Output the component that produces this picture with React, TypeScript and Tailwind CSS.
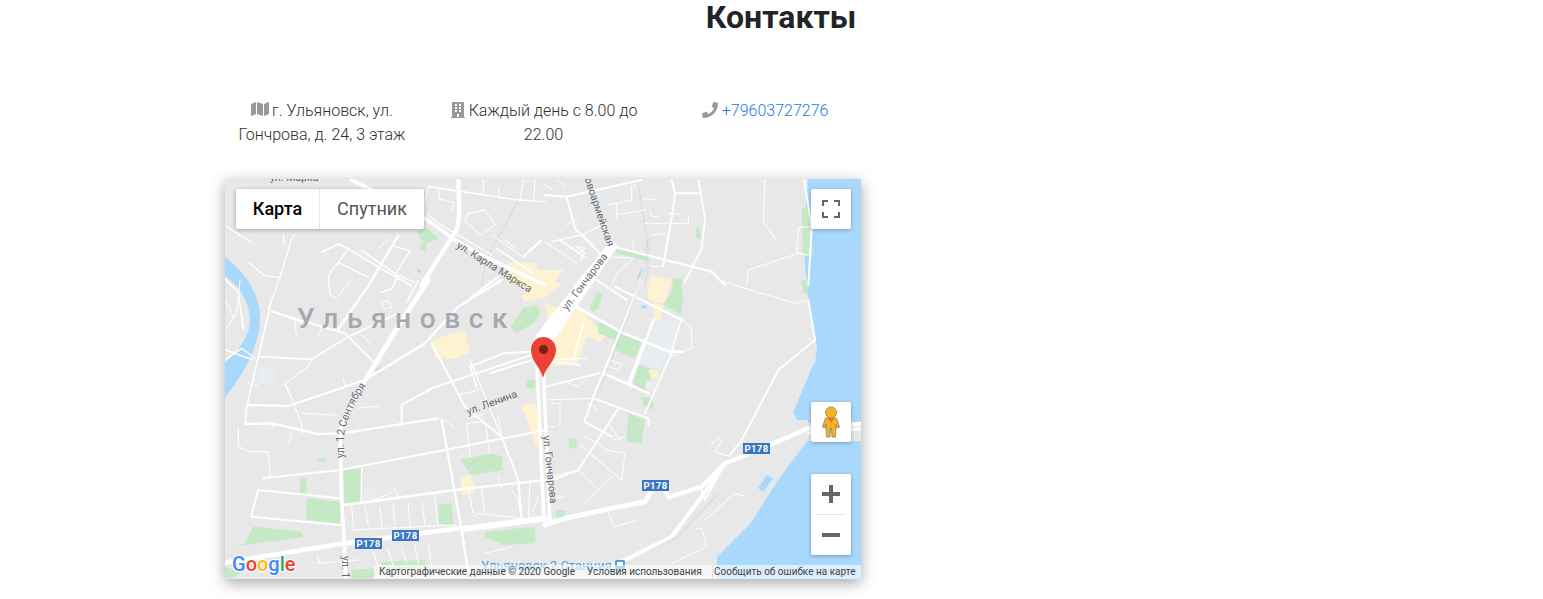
import { FaMap, FaBuilding, FaPhone } from "react-icons/fa";

type Line = [string, number];

const parks2 = [
  "355,570 410,565 408,668 358,670","245,655 345,665 345,730 245,720","85,740 230,755 235,772 130,785 30,800 60,790",
  "705,540 800,520 833,530 830,570 740,585","640,672 680,670 685,735 640,730","225,595 245,595 245,640 225,640",
  "280,533 302,533 302,545 280,545","910,300 930,300 930,325 905,325",
  "780,755 930,740 932,790 835,795 780,770","380,870 450,865 450,895 380,895","0,860 50,880 20,895 0,895","470,845 600,840 600,860 470,870",
  "445,265 470,260 460,285",
];
const yellow2 = [
  "620,180 720,150 735,220 680,238 630,235","890,375 930,370 945,440 950,520 930,490 905,420","705,590 740,585 750,640 710,645",
];
const pale2 = ["100,260 150,270 150,310 100,310","415,620 450,620 450,660 415,660"];

const roads2: Line[] = [
  ["M0,240 L50,205 L90,235",4],["M140,95 L240,125 L360,160 L450,250",5],["M105,230 L260,238 L370,170 L520,100",5],
  ["M140,60 L100,230 L65,380 L60,432",5],["M70,375 L190,378 L420,300 L600,190 L700,80 L830,0",7],
  ["M180,310 L230,430 L230,460",4],["M60,432 L140,430 L280,462 L350,460 L640,415",7],["M530,430 L530,375 L620,325 L950,215",6],
  ["M115,595 L345,570 L660,510 L960,450",6],["M100,630 L345,655",6],["M100,630 L78,710 L345,735",6],
  ["M360,675 L690,630 L960,600",7],["M620,190 L720,380 L830,470 L880,600 L890,720",6],["M735,240 L830,470",4],
  ["M650,420 L710,750 L730,880",7],["M725,430 L780,425 L795,520",3],["M725,430 L735,530",3],["M380,680 L385,740",3],["M420,680 L430,740",3],
  ["M465,680 L470,740",3],["M505,675 L510,745",3],["M550,670 L555,740",3],["M590,665 L600,735",3],["M628,645 L640,735",3],["M410,565 L408,668",4],
  ["M445,660 L495,640 L510,625 L520,650",3],["M380,750 L690,735",3],["M40,440 L40,500 L75,515 L130,515 L135,590",3],["M140,430 L145,445",3],
  ["M200,460 L190,495",3],["M230,400 L330,405",3],["M355,295 L360,320",3],["M410,165 L435,190",3],["M300,130 L280,165",3],
  ["M150,45 L130,60",3],["M210,130 L215,170",3],["M180,310 L250,260 L260,238",3],["M70,310 L100,320",3],
  ["M400,385 L460,378",3],["M660,420 L690,445",3],["M730,415 L780,400",3],["M810,380 L860,355",3],["M700,345 L760,330",3],
  ["M870,470 L960,450",3],["M820,410 L830,470",3],["M745,710 L760,700 L890,715",3],["M730,630 L745,700",3],["M770,625 L780,700",3],
  ["M820,590 L830,625",3],["M860,630 L880,660 L890,720",3],["M915,610 L910,710",3],["M940,650 L925,690",3],["M610,790 L620,860",3],
  ["M445,820 L460,860",3],["M490,810 L505,860",3],["M530,800 L545,850",3],["M570,795 L580,850",3],["M275,850 L400,840",3],["M275,825 L285,850",3],
  ["M780,820 L860,800",3],["M0,210 L85,240",4],["M45,0 L35,100 L0,150",3],["M0,60 L25,110",3],
];
const wide2: Line[] = [
  ["M425,295 L365,400 L345,450 L350,660 L358,790 L362,900",11],["M610,0 L500,170 L425,295",15],
  ["M0,848 L345,792 L700,745",14],["M715,747 L960,715",18],
];

const roads3: Line[] = [
  ["M210,20 L410,120",6],["M60,60 L225,155 L375,215 L410,215",8],["M290,0 L145,350 L118,425 L200,470",6],["M325,120 L255,310",8],
  ["M300,180 L250,310",7],["M410,115 L375,230 L300,400",5],["M145,355 L310,415 L310,435",6],["M175,280 L310,340",8],
  ["M220,385 L100,570 L20,600",6],["M100,570 L160,630",3],["M105,495 L230,600",3],["M200,590 L120,670",3],["M410,115 L440,150 L440,205 L375,230",3],
  ["M790,60 L810,180 L700,270 L590,480 L555,525",6],["M790,175 L810,190",3],["M520,0 L600,25 L750,70 L780,60",3],
  ["M495,500 L520,470 L530,485 L510,515 L555,530",3],["M450,745 L470,745 L485,800 L380,850",3],["M190,700 L210,740 L280,720",3],["M480,720 L570,640 L600,650",3],
  ["M0,360 L140,355",3],["M20,370 L45,370 L45,440",3],["M10,440 L30,440",3],["M130,370 L160,390",3],["M190,430 L225,480",3],["M120,470 L190,510",3],
  ["M180,510 L240,520 L230,600",3],["M240,470 L205,480",3],["M20,590 L80,575",3],["M0,660 L60,650",3],["M70,310 L100,320 L120,300",3],
  ["M190,240 L230,250 L220,270 L190,260 Z",3],["M0,240 L125,235",4],
];
const wide3: Line[] = [
  ["M0,735 L60,715 L200,685 L300,665 L320,630",15],["M360,630 L370,652 L470,620 L540,550 L640,510 L790,445 L960,430",13],
  ["M200,860 L380,770 L470,650 L540,550",12],["M540,550 L480,660 L470,630",6],["M790,460 L960,445",9],
];
const parks3 = [
  "225,160 290,185 270,235 210,210","160,125 225,150 210,180 160,160","285,255 315,265 310,325 265,305","290,350 320,355 330,390 295,375",
  "250,400 300,420 290,490 245,485","72,475 95,475 95,505 72,505","30,690 65,690 55,718 35,718",
  "770,0 790,0 790,40 775,40",
];
const pale3 = ["320,120 400,135 385,210 315,185","300,195 370,215 345,265 290,245","305,300 330,305 325,335 300,325"];
const yellow3 = ["310,270 340,270 340,295 320,295"];

const roads4: Line[] = [
  ["M610,35 L880,75",5],["M885,75 L960,80",4],["M610,35 L600,80",3],["M640,45 L645,80",3],
  ["M610,120 L640,145 L800,240",4],["M730,115 L780,105 L810,150 L770,180 L720,140 Z",3],["M775,15 L775,55",3],["M820,40 L825,70",3],
  ["M895,15 L885,75",3],["M930,15 L925,80",3],["M640,70 L690,85 L680,105",3],["M840,195 L870,220",3],["M800,180 L900,250",3],["M175,180 L175,205",3],
];
const wide4: Line[] = [["M700,15 L703,110 L697,160 L590,330",13],["M380,15 L440,45",11],["M600,130 L690,195 L780,245 L960,330",11]];
const gray4: Line[] = [["M610,35 L880,75 L785,250 L770,330",2]];

const roads5: Line[] = [
  ["M0,60 L65,65 L290,15",6],["M65,65 L90,160 L165,235",6],["M380,15 L390,55 L465,55",6],["M460,15 L480,130 L470,220 L420,320",5],["M390,55 L385,100 L355,270",6],
  ["M205,215 L500,290 L540,330",7],["M605,330 L610,285 L760,235 L790,240",3],["M778,15 L800,160 L790,330",6],["M660,15 L655,140 L690,190",3],["M760,160 L755,230 L780,240",3],
  ["M760,158 L795,155",3],["M20,200 L110,180 L190,140",4],["M210,120 L300,105",3],["M300,145 L430,145",3],["M430,120 L430,145",3],["M370,115 L405,118",3],
  ["M320,180 L360,175 L365,185",3],["M190,90 L215,85 L215,130",3],["M215,85 L260,75 L260,35 L275,30",3],["M295,70 L330,75",3],["M315,110 L320,125 L340,125",3],
  ["M40,15 L60,40",3],["M0,30 L25,45",3],["M100,235 L120,220 L100,215 L95,235",3],["M0,200 L60,240 L100,270",3],["M190,245 L265,250 L220,290 L200,330",3],
  ["M265,200 L265,225",3],["M65,150 L100,130",3],["M110,180 L150,210",3],["M310,270 L320,275 L355,275",3],["M130,280 L90,330",3],
];
const gray5: Line[] = [["M278,15 L315,250 L300,330",2]];

const yellow6 = [
  "50,160 115,125 115,65 195,70 205,90 280,90 255,125 275,135 240,155 225,175 165,185 155,170 175,150 115,125",
  "225,190 280,210 320,190 360,240 405,290 390,305 350,290 340,320 320,375 240,378 245,330 215,300 235,250",
  "545,105 605,120 585,185 555,190 530,170","550,190 580,195 570,245 555,245",
];
const parks6 = [
  "120,260 160,205 200,195 212,220 190,250 140,278","360,205 380,155 398,165 385,205 368,215","385,270 400,245 450,270 430,300",
  "430,310 450,280 515,310 495,355","490,420 505,375 545,395 530,450 495,450","580,195 605,155 610,115 635,115 640,180 632,225","170,425 190,420 190,445 170,445",
];
const pale6 = ["550,240 625,245 595,330 530,300","525,315 590,340 565,390 510,370"];
const roads6: Line[] = [
  ["M0,175 L85,110",6],["M160,50 L215,0",6],["M80,25 L190,100",5],["M270,0 L350,55",5],["M350,100 L470,180",6],["M0,380 L100,340 L185,335",6],["M20,440 L0,380",5],
  ["M60,400 L185,360",6],["M340,250 L310,360",6],["M240,365 L330,375",5],["M225,440 L390,400",6],["M320,20 L345,40 L330,60",4],
];

const upperLeft: Line[] = [
  ["M0,140 L80,190",4],["M70,250 L120,290 L165,295 L200,180 L210,165",4],["M0,300 L40,340 L55,450",5],["M165,295 L130,390",3],["M140,395 L230,430",5],
  ["M290,220 L340,195 L370,210 L470,270 L560,320",5],["M370,210 L310,290 L315,345 L335,360",4],["M340,250 L430,295",4],["M380,300 L340,350",3],
  ["M340,450 L430,320 L520,170",7],["M410,215 L520,290 L500,330 L470,340",5],["M520,290 L570,310",4],["M460,210 L490,180",3],["M500,200 L555,215 L510,290",4],
  ["M470,370 L490,365 L500,385 L480,390 Z",3],["M545,370 L580,305",4],["M175,170 L180,190",3],
];

function Polys({ pts, fill }: { pts: string[]; fill: string }) {
  return (
    <>
      {pts.map((p) => (
        <polygon key={p} points={p} fill={fill} />
      ))}
    </>
  );
}

function Lines({ items, stroke = "#ffffff" }: { items: Line[]; stroke?: string }) {
  return (
    <>
      {items.map(([d, w]) => (
        <path key={d} d={d} fill="none" stroke={stroke} strokeWidth={w} strokeLinejoin="round" strokeLinecap="round" />
      ))}
    </>
  );
}

function Shield({ x, y }: { x: number; y: number }) {
  return (
    <g>
      <rect x={x} y={y} width={27} height={11} fill="#3a76c4" />
      <text x={x + 13.5} y={y + 9} textAnchor="middle" fontSize="9.5" fontWeight="700" fill="#fff" letterSpacing="0.4">Р178</text>
    </g>
  );
}

function MapArt() {
  return (
    <svg viewBox="225 179 636 400" width="636" height="400" className="block">
      <defs>
        <path id="sent" d="M344,458 L344,436 Q348,410 366,386" />
      </defs>
      <rect x="225" y="179" width="636" height="400" fill="#e8e8e8" />

      <path d="M808,179 L861,179 L861,579 L717,579 L717,557 L751,523 L778,480 L808,440 L808,420 L797,420 L793,413 L812,367 L815,363 L817,347 L808,300 L803,240 Z" fill="#a9d8fd" />
      <path d="M225,257 C245,272 261,295 260,320 C259,350 240,378 225,398 L225,363 C240,350 250,335 250,320 C249,300 240,287 225,276 Z" fill="#a9d8fd" />
      <rect x="800" y="423" width="61" height="18" fill="#e8e8e8" />

      <g transform="translate(470 240) scale(0.33333)">
        <Polys pts={yellow6} fill="#fdf3d0" />
        <Polys pts={parks6} fill="#c5e8c5" />
        <Polys pts={pale6} fill="#e8edf2" />
        <polygon points="500,115 515,85 518,88 505,118" fill="#a9d8fd" />
        <polygon points="515,195 530,198 528,206 513,203" fill="#a9d8fd" />
        <polygon points="210,262 222,268 218,272 208,266" fill="#a9d8fd" />
        <polygon points="440,22 535,48 530,60 438,35" fill="#c5e8c5" />
      </g>

      <g transform="translate(225 280) scale(0.33333)">
        <Polys pts={parks2} fill="#c5e8c5" />
        <Polys pts={yellow2} fill="#fdf3d0" />
        <Polys pts={pale2} fill="#e8edf2" />
        <Lines items={roads2} />
        <Lines items={wide2} />
      </g>
      <g transform="translate(545 280) scale(0.33333)">
        <polygon points="640,625 665,585 685,595 655,635" fill="#a9d8fd" />
        <Polys pts={parks3} fill="#c5e8c5" />
        <Polys pts={pale3} fill="#e8edf2" />
        <Polys pts={yellow3} fill="#fdf3d0" />
        <path d="M0,320 L170,280" stroke="#d2d2d2" strokeWidth="5" fill="none" />
        <path d="M370,295 L470,340 L550,390" stroke="#efefef" strokeWidth="3" fill="none" />
        <path d="M200,860 L400,770 L520,640" stroke="#d4d4d4" strokeWidth="3" fill="none" />
        <Lines items={roads3} />
        <Lines items={wide3} />
      </g>
      <g transform="translate(225 175) scale(0.33333)">
        <polygon points="575,170 605,160 640,190 600,210" fill="#c5e8c5" />
        <polygon points="590,205 605,210 600,228 585,222" fill="#c5e8c5" />
        <polygon points="578,283 586,283 586,292 578,292" fill="#a9d8fd" />
        <Lines items={gray4} stroke="#cfcfcf" />
        <Lines items={roads4} />
        <Lines items={wide4} />
      </g>
      <g transform="translate(545 175) scale(0.33333)">
        <polygon points="770,100 790,100 805,240 775,240" fill="#c5e8c5" />
        <polygon points="452,158 465,158 468,190 455,190" fill="#c5e8c5" />
        <polygon points="215,220 310,245 305,258 215,235" fill="#c5e8c5" />
        <Lines items={gray5} stroke="#cfcfcf" />
        <Lines items={roads5} />
      </g>
      <g transform="translate(225 179) scale(0.33333)">
        <Lines items={upperLeft} />
      </g>
      <g transform="translate(470 240) scale(0.33333)">
        <Lines items={roads6} />
        <path d="M530,0 L530,80 L390,450" stroke="#cfcfcf" strokeWidth="2" fill="none" />
      </g>

      <polygon points="611,240 618,246 553,342 535,336" fill="#ffffff" />
      <path d="M537,365 L544,522" stroke="#fff" strokeWidth="3.5" fill="none" />
      <path d="M543,365 L550,522" stroke="#fff" strokeWidth="3.5" fill="none" />

      <g fill="#5f6871" fontSize="10.5">
        <text x="456" y="247" transform="rotate(32 456 247)">ул. Карла Маркса</text>
        <text x="567" y="311" transform="rotate(-53 567 311)">ул. Гончарова</text>
        <text x="468" y="415" transform="rotate(-20 468 415)">ул. Ленина</text>
        <text x="543" y="436" transform="rotate(84 543 436)">ул. Гончарова</text>
        <text x="342" y="556" transform="rotate(90 342 556)">ул. 1</text>
        <text x="582" y="172" transform="rotate(71 582 172)">Новоармейская</text>
        <text x="270" y="181">ул. Марка</text>
        <text><textPath href="#sent">ул. 12 Сентября</textPath></text>
      </g>
      <text x="297" y="328" fontSize="28" fontWeight="500" fill="#a4a9b1" letterSpacing="8.6">Ульяновск</text>
      <text x="481" y="570" fontSize="13" fill="#4ba1dc">Ульяновск 2 Станция</text>
      <rect x="615" y="560" width="10" height="11" rx="1.5" fill="#4ba1dc" />
      <rect x="617" y="562" width="6" height="4" fill="#fff" />

      <Shield x={355} y={538} />
      <Shield x={392} y={530} />
      <Shield x={642} y={480} />
      <Shield x={743} y={443} />

      <path d="M543,378 C540,366 531,361 531,350 A12.5,13 0 1 1 556,350 C556,361 546,366 543,378 Z" fill="#ea4335" />
      <circle cx="543.5" cy="349.5" r="4.5" fill="#7a1f14" />

      <text x="232" y="571" fontSize="20" fontWeight="500" stroke="#ffffff" strokeWidth="2" paintOrder="stroke">
        <tspan fill="#4285f4">G</tspan><tspan fill="#ea4335">o</tspan><tspan fill="#fbbc05">o</tspan><tspan fill="#4285f4">g</tspan><tspan fill="#34a853">l</tspan><tspan fill="#ea4335">e</tspan>
      </text>
    </svg>
  );
}

function Pegman() {
  return (
    <svg width="20" height="32" viewBox="0 0 20 32">
      <path d="M4.5,12 L15.5,12 L18.5,21 L16,22 L15,18 L14.5,31 L11,31 L10.5,22 L9.5,22 L9,31 L5.5,31 L5,18 L4,22 L1.5,21 Z" fill="#f5b324" stroke="#8a7d5c" strokeWidth="0.8" strokeLinejoin="round" />
      <circle cx="10" cy="6.5" r="5.5" fill="#f5b324" stroke="#8a7d5c" strokeWidth="0.8" />
      <path d="M6.5,12 L13.5,12 L10,17 Z" fill="#e6762b" />
    </svg>
  );
}

export default function App() {
  return (
    <div className="h-[599px] overflow-hidden bg-white font-['Roboto',sans-serif] text-[#2f2f2f]">
      <h1 className="h-[34px] pl-[19px] text-center text-[32px] leading-[34px] font-bold text-[#212529]">Контакты</h1>

      <div className="mt-[65px] ml-[211px] grid w-[665px] grid-cols-3 text-center text-base leading-6 font-light">
        <div className="px-[14px]">
          <FaMap className="mr-[3px] inline-block align-[-2px] text-[#999]" size={18} />
          г. Ульяновск, ул. Гончрова, д. 24, 3 этаж
        </div>
        <div className="px-[14px]">
          <FaBuilding className="mr-[3px] inline-block align-[-2px] text-[#999]" size={16} />
          Каждый день с 8.00 до 22.00
        </div>
        <div className="px-[14px]">
          <FaPhone className="mr-1 inline-block align-[-2px] text-[#999]" size={16} />
          <a className="text-[#1f7ade]">+79603727276</a>
        </div>
      </div>

      <div className="relative mt-[32px] ml-[225px] h-[400px] w-[636px] overflow-hidden shadow-[0_4px_14px_rgba(0,0,0,0.35)]">
        <MapArt />

        <div className="absolute top-[10px] left-[11px] flex h-10 w-[188px] rounded-[2px] bg-white text-[18px] leading-10 shadow-[0_1px_4px_rgba(0,0,0,0.3)]">
          <div className="w-[84px] border-r border-[#e6e6e6] text-center font-medium text-black">Карта</div>
          <div className="flex-1 text-center text-[#565656]">Спутник</div>
        </div>

        <div className="absolute top-[10px] right-[10px] flex h-10 w-10 items-center justify-center rounded-[2px] bg-white shadow-[0_1px_4px_rgba(0,0,0,0.3)]">
          <svg width="18" height="18" viewBox="0 0 18 18" fill="none" stroke="#666" strokeWidth="2">
            <path d="M1,6 V1 H6 M12,1 H17 V6 M17,12 V17 H12 M6,17 H1 V12" />
          </svg>
        </div>

        <div className="absolute top-[223px] right-[10px] flex h-10 w-10 items-center justify-center rounded-[2px] bg-white shadow-[0_1px_4px_rgba(0,0,0,0.3)]">
          <Pegman />
        </div>

        <div className="absolute top-[295px] right-[10px] flex h-[81px] w-10 flex-col items-center rounded-[2px] bg-white shadow-[0_1px_4px_rgba(0,0,0,0.3)]">
          <div className="flex h-10 items-center justify-center">
            <svg width="18" height="18" viewBox="0 0 18 18" fill="#666"><path d="M0,7 H7 V0 H11 V7 H18 V11 H11 V18 H7 V11 H0 Z" /></svg>
          </div>
          <div className="h-px w-[30px] bg-[#e6e6e6]" />
          <div className="flex h-10 items-center justify-center">
            <svg width="18" height="18" viewBox="0 0 18 18" fill="#666"><path d="M0,7 H18 V11 H0 Z" /></svg>
          </div>
        </div>

        <div className="absolute right-0 bottom-0 flex h-[14px] text-[10px] leading-[14px] text-[#444]">
          <div className="w-[208px] bg-white/60 pl-[5px]">Картографические данные © 2020 Google</div>
          <div className="w-[131px] border-r border-[#e0e0e0] bg-white/60 pl-[5px]">Условия использования</div>
          <div className="w-[148px] bg-white/60 pl-[1px]">Сообщить об ошибке на карте</div>
        </div>
      </div>
    </div>
  );
}
